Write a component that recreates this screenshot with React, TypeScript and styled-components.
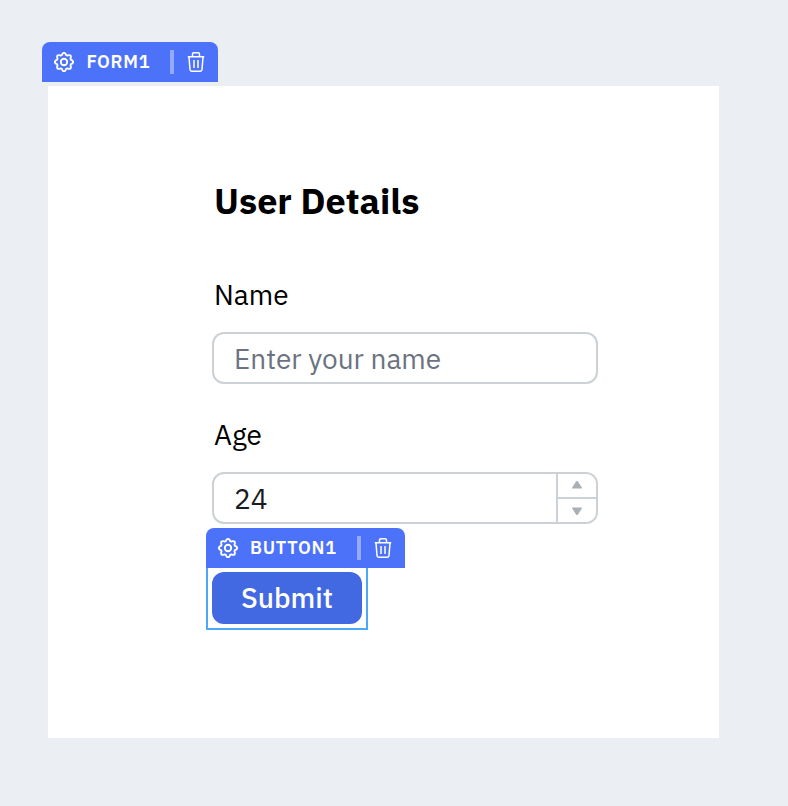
import React from 'react';
import styled, { createGlobalStyle } from 'styled-components';

const GlobalStyle = createGlobalStyle`
  * { box-sizing: border-box; }
  body {
    margin: 0;
    background: #ebeff4;
    font-family: "IBM Plex Sans", "Noto Sans", sans-serif;
  }
`;

const Canvas = styled.main`
  width: 788px;
  height: 806px;
  padding: 86px 69px 68px 48px;
  background: #ebeff4;
  overflow: hidden;
`;

const FormWidget = styled.form`
  position: relative;
  display: flex;
  flex-direction: column;
  width: 671px;
  height: 652px;
  padding: 90px 0 0 164px;
  background: #fff;
`;

const WidgetTag = styled.div<{ $width: number; $top: number; $left: number }>`
  position: absolute;
  z-index: 1;
  top: ${p => p.$top}px;
  left: ${p => p.$left}px;
  display: flex;
  align-items: center;
  width: ${p => p.$width}px;
  height: 40px;
  padding: 0 13px 0 11px;
  border-radius: 8px 8px 0 0;
  background: #4c72fa;
  color: #fff;
`;

const TagName = styled.span`
  flex: 1;
  margin-left: 11px;
  font-size: 18px;
  font-weight: 600;
  line-height: 40px;
  letter-spacing: 0.72px;
  white-space: nowrap;
`;

const Divider = styled.span`
  width: 4px;
  height: 24px;
  margin-right: 13px;
  background: #94aafc;
`;

const Title = styled.h1`
  height: 50px;
  margin: 0 0 42px 2px;
  color: #000;
  font-size: 36px;
  font-weight: 700;
  line-height: 50px;
  white-space: nowrap;
`;

const Field = styled.div`
  display: flex;
  flex-direction: column;
  width: 386px;
  height: 140px;
`;

const Label = styled.label`
  height: 40px;
  margin: 7px 0 17px 2px;
  color: #000;
  font-size: 28px;
  line-height: 40px;
`;

const Control = styled.div`
  display: flex;
  height: 52px;
  flex-shrink: 0;
  border: 2px solid #cbd1d5;
  border-radius: 12px;
  background: #fff;
  overflow: hidden;
`;

const Input = styled.input`
  flex: 1;
  min-width: 0;
  height: 48px;
  padding: 0 0 0 20px;
  border: 0;
  outline: 0;
  background: transparent;
  color: #181b22;
  font: 400 28px "IBM Plex Sans", "Noto Sans", sans-serif;
  &::placeholder { color: #6b7380; opacity: 1; }
`;

const Stepper = styled.div`
  display: flex;
  flex-direction: column;
  width: 40px;
  border-left: 2px solid #cbd1d5;
`;

const Step = styled.button`
  display: flex;
  flex: 1;
  align-items: center;
  justify-content: center;
  padding: 0 0 1px;
  border: 0;
  background: #fff;
  color: #a9b0b5;
  & + & {
    padding: 1px 0 0;
    border-top: 2px solid #cbd1d5;
  }
`;

const ButtonWidget = styled.div`
  position: relative;
  width: 162px;
  height: 62px;
  margin: 20px 0 0 -6px;
  padding: 4px;
  border: 2px solid #4ea8f8;
  border-top: 0;
`;

const SubmitButton = styled.button`
  width: 150px;
  height: 52px;
  padding: 0;
  border: 0;
  border-radius: 12px;
  background: #4269e2;
  color: #fff;
  font: 500 28px/52px "IBM Plex Sans", "Noto Sans", sans-serif;
`;

// Eight evenly spaced, slightly flared teeth around the hub.
const gearPath = Array.from({ length: 8 }, (_, i) => {
  const point = (radius: number, degrees: number) => {
    const a = ((i * 45 + degrees - 90) * Math.PI) / 180;
    return `${(11 + radius * Math.cos(a)).toFixed(2)} ${(11 + radius * Math.sin(a)).toFixed(2)}`;
  };
  return `${i ? 'L' : 'M'}${point(7.3, -17)} Q${point(7.9, -14)} ${point(8.4, -10)} Q${point(10, 0)} ${point(8.4, 10)} Q${point(7.9, 14)} ${point(7.3, 17)}`;
}).join(' ') + 'Z';

const GearIcon = () => (
  <svg width="22" height="22" viewBox="0 0 22 22" fill="none" stroke="currentColor" strokeWidth="1.9" strokeLinejoin="round">
    <path d={gearPath} />
    <circle cx="11" cy="11" r="3.2" />
  </svg>
);

const TrashIcon = () => (
  <svg width="18" height="22" viewBox="0 0 18 22" fill="none" stroke="currentColor" strokeWidth="1.5" strokeLinejoin="round">
    <path d="M.8 5.8h16.4M5.5 5.5V3.2q0-1.4 1.4-1.4h4.2q1.4 0 1.4 1.4v2.3" />
    <path d="M2 6l1 12.5q.1 1.7 1.7 1.7h8.6q1.6 0 1.7-1.7L16 6" />
    <path d="M7 9v8M11 9v8" />
  </svg>
);

const ArrowIcon = ({ down = false }: { down?: boolean }) => (
  <svg width="12" height="10" viewBox="0 0 12 10" fill="currentColor">
    <path d={down ? 'M1.4 1.5h9.2q.7.3.2 1.1L7 8.6q-1 1-2 0L1.2 2.6Q.7 1.8 1.4 1.5Z' : 'M1.4 8.5h9.2q.7-.3.2-1.1L7 1.4q-1-1-2 0L1.2 7.4Q.7 8.2 1.4 8.5Z'} />
  </svg>
);

interface TagProps { name: string; width: number; top: number; left: number }

const Tag = ({ name, width, top, left }: TagProps) => (
  <WidgetTag $width={width} $top={top} $left={left}>
    <GearIcon />
    <TagName>{name}</TagName>
    <Divider />
    <TrashIcon />
  </WidgetTag>
);

export default function App() {
  return (
    <>
      <GlobalStyle />
      <Canvas>
        <FormWidget onSubmit={e => e.preventDefault()}>
          <Tag name="FORM1" width={175.4} top={-44} left={-5.6} />
          <Title>User Details</Title>
          <Field>
            <Label htmlFor="name">Name</Label>
            <Control><Input id="name" placeholder="Enter your name" /></Control>
          </Field>
          <Field>
            <Label htmlFor="age">Age</Label>
            <Control>
              <Input id="age" defaultValue="24" />
              <Stepper>
                <Step type="button" aria-label="Increase"><ArrowIcon /></Step>
                <Step type="button" aria-label="Decrease"><ArrowIcon down /></Step>
              </Stepper>
            </Control>
          </Field>
          <ButtonWidget>
            <Tag name="BUTTON1" width={199} top={-40} left={-2} />
            <SubmitButton type="submit">Submit</SubmitButton>
          </ButtonWidget>
        </FormWidget>
      </Canvas>
    </>
  );
}
